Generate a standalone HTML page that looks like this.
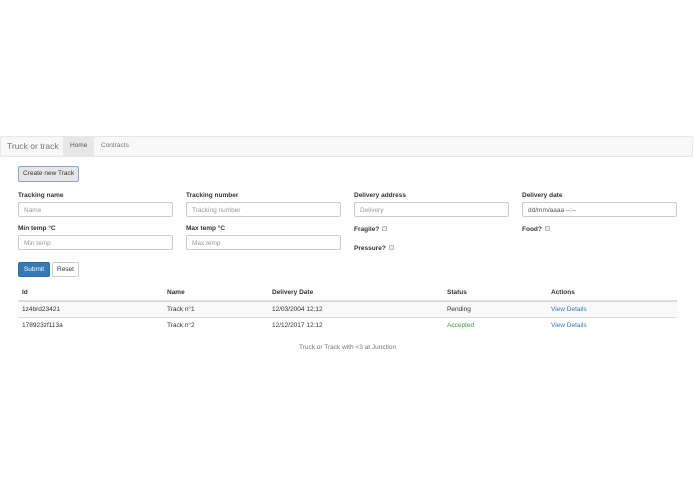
<!DOCTYPE html>
<html><head><meta charset="utf-8"><style>
*{box-sizing:border-box;margin:0;padding:0}
body{width:695px;height:494px;background:#fff;font-family:"Liberation Sans",sans-serif;color:#333;position:relative;overflow:hidden;font-size:7px}
.a{position:absolute;white-space:nowrap}
.nav{position:absolute;left:0;top:136px;width:693px;height:21px;background:#f8f8f8;border:1px solid #e7e7e7;border-radius:2px}
.lbl{position:absolute;font-weight:bold;font-size:6.5px;color:#333}
.inp{position:absolute;height:15px;border:1px solid #ccc;border-radius:2px;background:#fff;font-size:6.5px;color:#999;padding:4px 5px;line-height:8px}
.cb{display:inline-block;width:5px;height:5px;border:1px solid #bbb;border-radius:1px;background:#eee;vertical-align:top;margin-left:3px;margin-top:0}
.row{position:absolute;left:18px;width:659px;height:16px;border-top:1px solid #ddd}
.t{position:absolute;white-space:nowrap;font-size:6.5px}
</style></head><body>
<div class="nav"></div>
<div class="a" style="left:7px;top:141px;font-size:8.5px;color:#777">Truck or track</div>
<div class="a" style="left:63px;top:137px;width:31px;height:19px;background:#e7e7e7"></div>
<div class="a" style="left:70px;top:142px;font-size:6.5px;color:#555">Home</div>
<div class="a" style="left:101px;top:142px;font-size:6.5px;color:#777">Contracts</div>
<div class="a" style="left:18px;top:166px;width:61px;height:16px;background:#e6e6e6;border:1px solid #8aa4cf;border-radius:2px;font-size:6.5px;color:#333;text-align:center;line-height:14px">Create new Track</div>

<div class="lbl" style="left:18px;top:192px">Tracking name</div>
<div class="lbl" style="left:186px;top:192px">Tracking number</div>
<div class="lbl" style="left:354px;top:192px">Delivery address</div>
<div class="lbl" style="left:522px;top:192px">Delivery date</div>
<div class="inp" style="left:18px;top:202px;width:155px">Name</div>
<div class="inp" style="left:186px;top:202px;width:155px">Tracking number</div>
<div class="inp" style="left:354px;top:202px;width:155px">Delivery</div>
<div class="inp" style="left:522px;top:202px;width:155px;color:#555">dd/mm/aaaa --:--</div>

<div class="lbl" style="left:18px;top:225px">Min temp °C</div>
<div class="lbl" style="left:186px;top:225px">Max temp °C</div>
<div class="lbl" style="left:354px;top:226px">Fragile?<span class="cb"></span></div>
<div class="lbl" style="left:522px;top:226px">Food?<span class="cb"></span></div>
<div class="inp" style="left:18px;top:235px;width:155px">Min temp</div>
<div class="inp" style="left:186px;top:235px;width:155px">Max temp</div>
<div class="lbl" style="left:354px;top:245px">Pressure?<span class="cb"></span></div>

<div class="a" style="left:18px;top:262px;width:32px;height:15px;background:#337ab7;border:1px solid #2e6da4;border-radius:2px;color:#fff;font-size:6.5px;text-align:center;line-height:14px">Submit</div>
<div class="a" style="left:52px;top:262px;width:27px;height:15px;background:#fff;border:1px solid #ccc;border-radius:2px;color:#333;font-size:6.5px;text-align:center;line-height:14px">Reset</div>

<div class="t" style="left:22px;top:289px;font-weight:bold">Id</div>
<div class="t" style="left:167px;top:289px;font-weight:bold">Name</div>
<div class="t" style="left:272px;top:289px;font-weight:bold">Delivery Date</div>
<div class="t" style="left:447px;top:289px;font-weight:bold">Status</div>
<div class="t" style="left:551px;top:289px;font-weight:bold">Actions</div>
<div class="row" style="top:300px;border-top:2px solid #ddd;background:#f9f9f9;height:17px"></div>
<div class="row" style="top:317px"></div>
<div class="t" style="left:22px;top:306px">1z4brd23421</div>
<div class="t" style="left:167px;top:306px">Track n°1</div>
<div class="t" style="left:272px;top:306px">12/03/2004 12:12</div>
<div class="t" style="left:447px;top:306px">Pending</div>
<div class="t" style="left:551px;top:306px;color:#337ab7">View Details</div>
<div class="t" style="left:22px;top:322px">178923zf113a</div>
<div class="t" style="left:167px;top:322px">Track n°2</div>
<div class="t" style="left:272px;top:322px">12/12/2017 12:12</div>
<div class="t" style="left:447px;top:322px;color:#3c9a3c">Accepted</div>
<div class="t" style="left:551px;top:322px;color:#337ab7">View Details</div>
<div class="t" style="left:0;width:695px;text-align:center;top:344px;color:#777">Truck or Track with &lt;3 at Junction</div>
</body></html>
